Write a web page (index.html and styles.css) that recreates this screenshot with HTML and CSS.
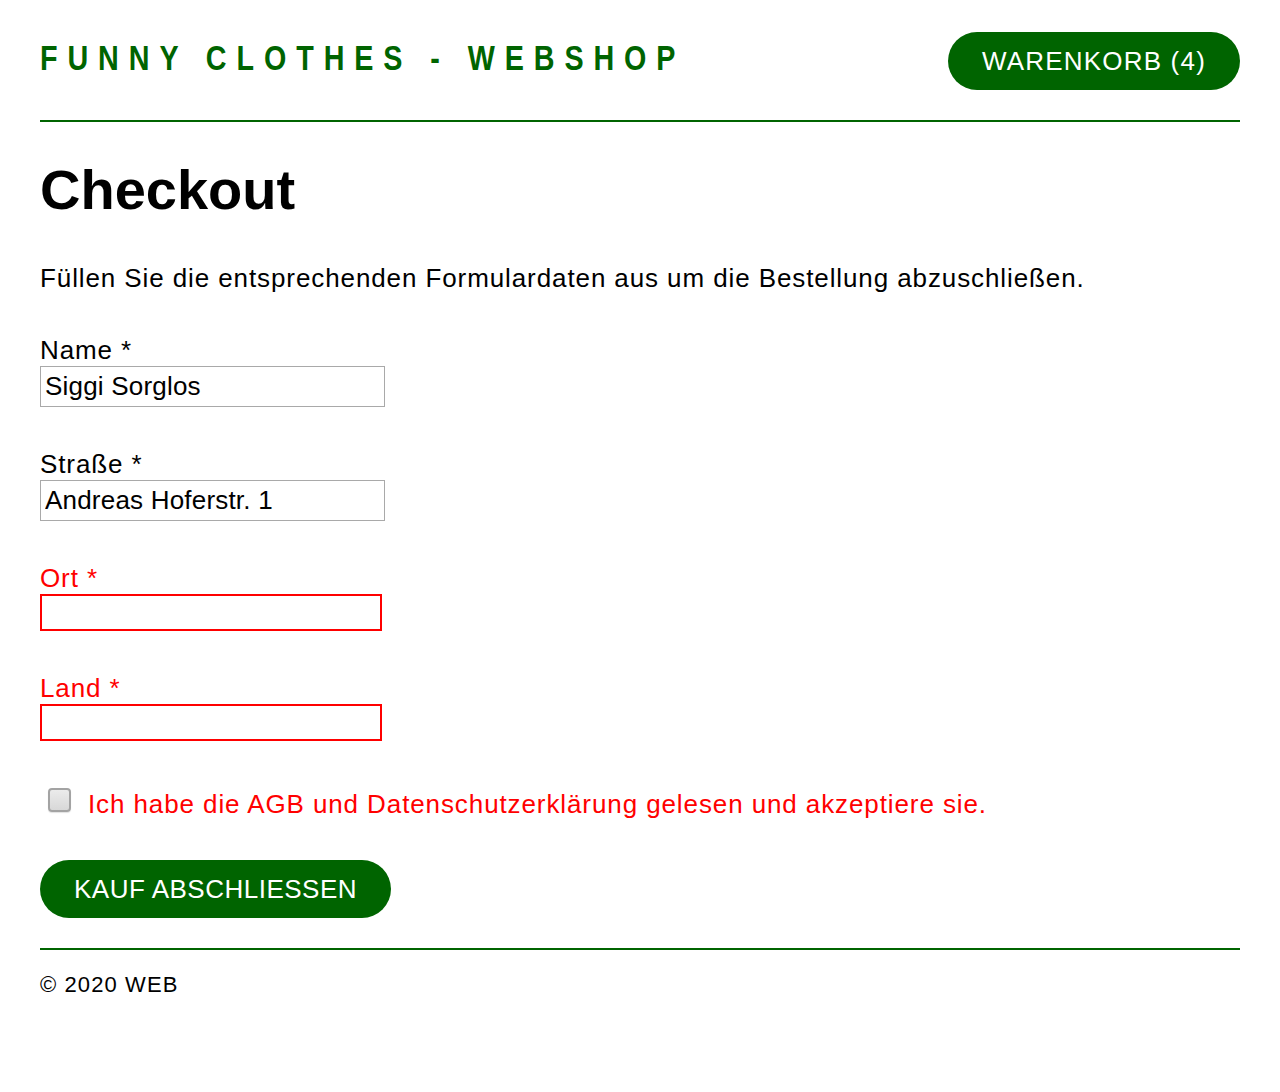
FILE: index.html
```html
<!DOCTYPE html>
<html lang="de">
<head>
<meta charset="utf-8">
<title>Funny Clothes - Webshop</title>
<link rel="stylesheet" href="styles.css">
</head>
<body>
<header class="site-header">
  <div class="brand">FUNNY CLOTHES - WEBSHOP</div>
  <a class="cart-btn" href="#">WARENKORB (4)</a>
</header>
<main class="content">
  <h1 class="page-title">Checkout</h1>
  <p class="intro">Füllen Sie die entsprechenden Formulardaten aus um die Bestellung abzuschließen.</p>
  <form class="checkout-form">
    <div class="field">
      <label class="field-label">Name *</label>
      <input class="field-input" type="text" value="Siggi Sorglos">
    </div>
    <div class="field">
      <label class="field-label">Straße *</label>
      <input class="field-input" type="text" value="Andreas Hoferstr. 1">
    </div>
    <div class="field field-error">
      <label class="field-label">Ort *</label>
      <input class="field-input" type="text" value="">
    </div>
    <div class="field field-error">
      <label class="field-label">Land *</label>
      <input class="field-input" type="text" value="">
    </div>
    <div class="agb-row">
      <input class="agb-check" type="checkbox">
      <span class="agb-text">Ich habe die AGB und Datenschutzerklärung gelesen und akzeptiere sie.</span>
    </div>
    <button class="submit-btn" type="button">KAUF ABSCHLIESSEN</button>
  </form>
</main>
<footer class="site-footer">© 2020 WEB</footer>
</body>
</html>
```

FILE: styles.css
```css
* { box-sizing: border-box; }

body {
  margin: 0;
  padding: 32px 40px 40px;
  font-family: "Liberation Sans", Arial, sans-serif;
  color: #000;
  background: #fff;
}

.site-header {
  display: flex;
  justify-content: space-between;
  align-items: flex-start;
  padding-bottom: 30px;
  border-bottom: 2px solid #006400;
}

.brand {
  margin-top: 6px;
  font-family: "Liberation Sans", Arial, sans-serif;
  font-weight: bold;
  font-size: 35px;
  letter-spacing: 12.1px;
  color: #006400;
  white-space: nowrap;
  transform: scaleX(0.82);
  transform-origin: left center;
}

.cart-btn {
  display: block;
  padding: 14px 34px;
  font-size: 26px;
  line-height: 30px;
  letter-spacing: 1.2px;
  color: #fff;
  background: #006400;
  border-radius: 29px;
  text-decoration: none;
}

.page-title {
  margin: 36px 0 41px;
  font-size: 56px;
  line-height: 64px;
  font-weight: bold;
}

.intro {
  margin: 0 0 40px;
  font-size: 26px;
  line-height: 30px;
  letter-spacing: 0.9px;
}

.field {
  margin-bottom: 40px;
}

.field-label {
  display: block;
  padding-top: 2px;
  font-size: 26px;
  line-height: 30px;
  letter-spacing: 0.9px;
}

.field-input {
  display: block;
  margin-top: 1px;
  width: 345px;
  height: 41px;
  padding: 0 4px;
  font-family: "Liberation Sans", Arial, sans-serif;
  font-size: 26px;
  letter-spacing: 0.2px;
  color: #000;
  border: 1px solid #a9a9a9;
  border-radius: 0;
  outline: none;
}

.field-error .field-label { color: #ff0000; }

.field-error .field-input {
  width: 342px;
  height: 37px;
  border: 2px solid #ff0000;
}

.agb-row {
  display: flex;
  align-items: flex-start;
  margin-top: 47px;
}

.agb-check {
  appearance: none;
  -webkit-appearance: none;
  flex: none;
  margin: 0 17px 0 8px;
  width: 23px;
  height: 24px;
  border: 2px solid #a3a3a3;
  border-radius: 4px;
  background: linear-gradient(#ebebeb, #d8d8d8);
  box-shadow: 0 1px 1px rgba(0,0,0,0.12);
}

.agb-text {
  padding-top: 1px;
  font-size: 26px;
  line-height: 30px;
  letter-spacing: 0.9px;
  color: #ff0000;
}

.submit-btn {
  display: block;
  margin-top: 41px;
  padding: 14px 34px;
  font-family: "Liberation Sans", Arial, sans-serif;
  font-size: 26px;
  line-height: 30px;
  letter-spacing: 0.5px;
  color: #fff;
  background: #006400;
  border: none;
  border-radius: 29px;
}

.site-footer {
  margin-top: 30px;
  padding-top: 22px;
  border-top: 2px solid #006400;
  font-size: 22px;
  line-height: 26px;
  letter-spacing: 1.1px;
}
```
